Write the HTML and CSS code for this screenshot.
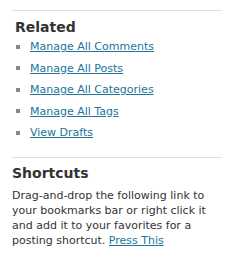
FILE: index.html
```html
<!DOCTYPE html>
<html lang="en">
<head>
<meta charset="UTF-8">
<title>Related</title>
<link rel="stylesheet" href="styles.css">
</head>
<body>
<div class="box related">
    <h3>Related</h3>
    <ul>
        <li><a href="#">Manage All Comments</a></li>
        <li><a href="#">Manage All Posts</a></li>
        <li><a href="#">Manage All Categories</a></li>
        <li><a href="#">Manage All Tags</a></li>
        <li><a href="#">View Drafts</a></li>
    </ul>
</div>
<div class="box shortcuts">
    <h3>Shortcuts</h3>
    <p>Drag-and-drop the following link to your bookmarks bar or right click it and add it to your favorites for a posting shortcut. <a href="#">Press This</a></p>
</div>
</body>
</html>
```

FILE: styles.css
```css
body {
    margin: 0;
    padding: 10px 14px 0 12px;
    font-family: "DejaVu Sans", Verdana, sans-serif;
    font-size: 11px;
    color: #333;
    background: #fff;
}
a { color: #21759b; }
.box { border-top: 1px solid #dfdfdf; }
.box h3 { font-size: 14px; margin: 7px 0 7px; color: #333; }
.related h3 { padding-left: 3px; margin: 8px 0 1px; }
.related ul { list-style: none; margin: 0 0 13px; padding: 0; }
.related li { display: flex; align-items: center; height: 21.5px; padding-left: 4px; }
.related li::before { content: ""; width: 4px; height: 4px; background: #888; margin-right: 10px; }
.shortcuts p { margin: 0; line-height: 15.3px; }
```
